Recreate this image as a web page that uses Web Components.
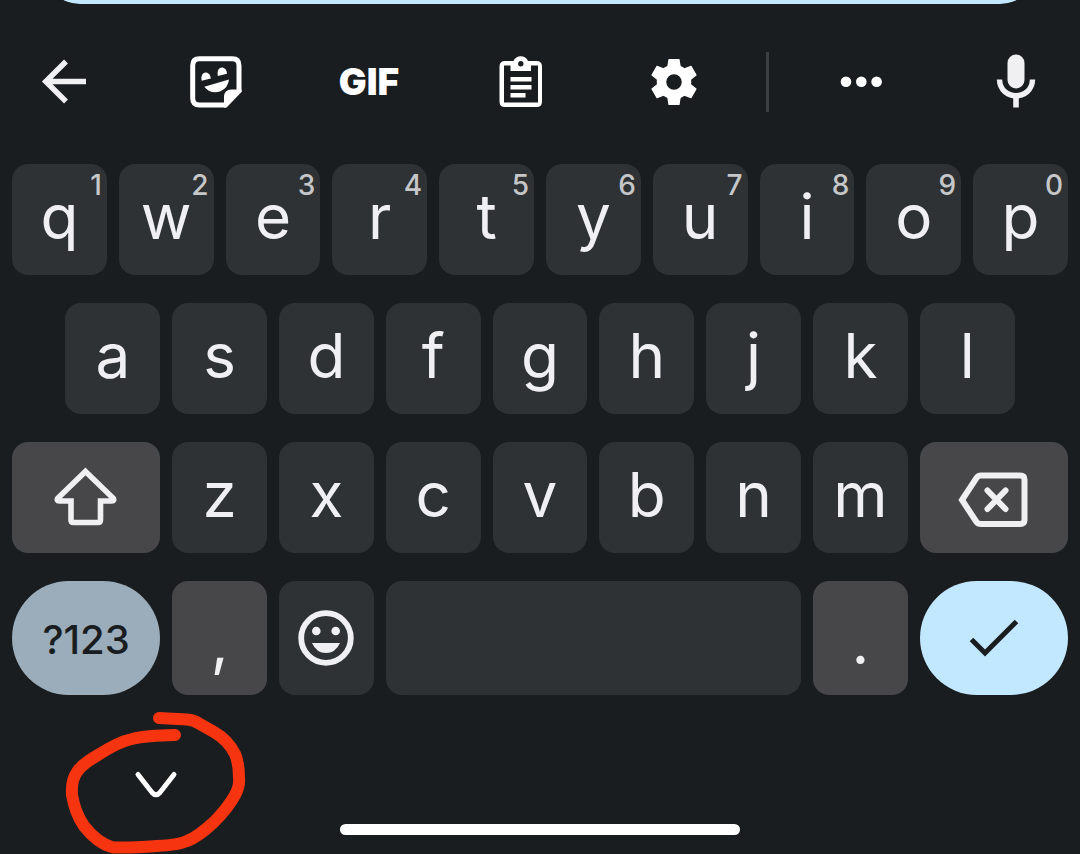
<!DOCTYPE html>
<html lang="en">
<head>
<meta charset="utf-8">
<meta name="viewport" content="width=device-width, initial-scale=1">
<title>Keyboard</title>
<style>
  body { margin: 0; background: #191d1f; color: #f0f0f3; font-family: Inter, Roboto, sans-serif; overflow: hidden; }
</style>
</head>
<body>
<kb-screen>
  <kb-toolbar slot="toolbar"></kb-toolbar>
  <kb-row>
    <kb-key hint="1">q</kb-key><kb-key hint="2">w</kb-key><kb-key hint="3">e</kb-key><kb-key hint="4">r</kb-key><kb-key hint="5">t</kb-key><kb-key hint="6">y</kb-key><kb-key hint="7">u</kb-key><kb-key hint="8">i</kb-key><kb-key hint="9">o</kb-key><kb-key hint="0">p</kb-key>
  </kb-row>
  <kb-row>
    <kb-key inset>a</kb-key><kb-key>s</kb-key><kb-key>d</kb-key><kb-key>f</kb-key><kb-key>g</kb-key><kb-key>h</kb-key><kb-key>j</kb-key><kb-key>k</kb-key><kb-key>l</kb-key>
  </kb-row>
  <kb-row>
    <kb-key wide tone="raised" icon label="Shift"><svg width="72" height="72" viewBox="0 0 72 72" fill="none" stroke="currentColor" stroke-width="5.600"><path d="M35.500 9.500 L63 36 Q65 38.800 61.500 39 H50.500 V58 Q50.500 60.500 48 60.500 H23.500 Q21 60.500 21 58 V39 H9.500 Q6 38.800 8 36 Z"/></svg></kb-key>
    <kb-key>z</kb-key><kb-key>x</kb-key><kb-key>c</kb-key><kb-key>v</kb-key><kb-key>b</kb-key><kb-key>n</kb-key><kb-key>m</kb-key>
    <kb-key wide tone="raised" icon label="Delete"><svg width="72" height="72" viewBox="0 0 72 72" fill="none" stroke="currentColor" stroke-width="6"><path d="M4 38 L18.500 16 Q20 13.500 23 13.500 H62 Q66.500 13.500 66.500 17.500 V58 Q66.500 62 62 62 H23 Q20 62 18.500 60 Z"/><path d="M29.500 28.500 L47.500 47 M47.500 28.500 L29.500 47" stroke-linecap="round"/></svg></kb-key>
  </kb-row>
  <kb-row tall>
    <kb-key wide tone="symbols">?123</kb-key>
    <kb-key tone="raised" low>,</kb-key>
    <kb-key icon label="Emoji"><svg width="56" height="56" viewBox="0 0 56 56" fill="currentColor"><circle cx="28" cy="28" r="24.800" fill="none" stroke="currentColor" stroke-width="5.800"/><circle cx="18.300" cy="21" r="4.300"/><circle cx="37.700" cy="21" r="4.300"/><path d="M14 33 H42 Q37.500 43 28 43 T14 33Z"/></svg></kb-key>
    <kb-key space label="Space"></kb-key>
    <kb-key tone="raised" low>.</kb-key>
    <kb-key wide tone="action" icon label="Done"><svg width="56" height="56" viewBox="0 0 56 56" fill="none" stroke="currentColor" stroke-width="5"><path d="M5.500 29.500 L19 43 L50.500 11.500"/></svg></kb-key>
  </kb-row>
  <kb-nav slot="nav"></kb-nav>
</kb-screen>

<script>
  function define(name, markup, setup) {
    const template = document.createElement('template');
    template.innerHTML = markup;
    customElements.define(name, class extends HTMLElement {
      constructor() {
        super();
        this.attachShadow({ mode: 'open' }).append(template.content.cloneNode(true));
      }
      connectedCallback() { if (setup) setup(this); }
    });
  }

  define('kb-screen', `
    <style>
      :host { display: flow-root; }
      .field { height: 72px; margin: -68px 44px 0; background: #c2e8ff; border-radius: 36px; }
      main { display: flex; flex-direction: column; gap: 28px; padding: 0 12px; }
    </style>
    <div class="field"></div>
    <slot name="toolbar"></slot>
    <main><slot></slot></main>
    <slot name="nav"></slot>`);

  define('kb-row', `
    <style>
      :host { display: grid; grid-template-columns: repeat(20, minmax(0, 1fr)); grid-auto-rows: 111px; gap: 12px; }
      :host([tall]) { grid-auto-rows: 114px; }
    </style>
    <slot></slot>`);

  define('kb-key', `
    <style>
      :host { display: block; grid-column: span 2; }
      :host([inset]) { grid-column: 2 / span 2; }
      :host([wide]) { grid-column: span 3; }
      :host([space]) { grid-column: span 8; }
      button {
        position: relative; display: flex; align-items: center; justify-content: center;
        box-sizing: border-box; width: 100%; height: 100%; margin: 0; padding: 0 0 6px; border: 0;
        border-radius: 16px; background: #2e3234; color: #f0f0f3;
        font: inherit; font-size: 62px; line-height: 80px;
      }
      .hint { position: absolute; top: 5px; right: 5px; color: #c6c7c9; font-size: 28px; line-height: 32px; font-weight: 500; }
      :host([tone="raised"]) button { background: #474749; }
      :host([icon]) button { padding: 0; }
      :host([low]) button { padding: 8px 0 0; }
      :host([tone="symbols"]) button { background: #9badbb; color: #191d1f; border-radius: 58px; font-size: 40px; font-weight: 500; padding: 4px 0 0; }
      :host([tone="action"]) button { background: #c2e8ff; color: #191d1f; border-radius: 58px; }
    </style>
    <button type="button"><slot></slot></button>`,
    host => {
      const button = host.shadowRoot.querySelector('button');
      const hint = host.getAttribute('hint');
      const label = host.getAttribute('label');
      if (label) button.setAttribute('aria-label', label);
      if (hint && !button.querySelector('.hint')) {
        const span = document.createElement('span');
        span.className = 'hint';
        span.textContent = hint;
        button.append(span);
      }
    });

  define('kb-tool', `
    <style>
      :host { display: block; }
      button { display: flex; align-items: center; justify-content: center; width: 72px; height: 72px; margin: 0; padding: 0; border: 0; background: none; color: #fff; font: 900 37px/40px Inter, sans-serif; }
    </style>
    <button type="button"><slot></slot></button>`,
    host => {
      const label = host.getAttribute('label');
      if (label) host.shadowRoot.querySelector('button').setAttribute('aria-label', label);
    });

  define('kb-toolbar', `
    <style>
      :host { display: flex; align-items: center; height: 156px; padding: 0 28px 4px; }
      .tools { display: flex; justify-content: space-between; flex: 3; }
      .more { flex: 1; }
      .divider { width: 3px; height: 60px; margin: 0 56px; background: #3b3f41; }
      svg { display: block; }
    </style>
    <div class="tools">
      <kb-tool label="Back"><svg width="56" height="56" viewBox="0 0 56 56" fill="none" stroke="#f0f0f3" stroke-width="5.500"><path d="M50 27.500 H10 M30 7.500 L9.800 27.500 L30 47.500"/></svg></kb-tool>
      <kb-tool label="Stickers"><svg width="56" height="56" viewBox="0 0 56 56" fill="#fff"><path d="M38 51 H11.500 Q4.700 51 4.700 44.200 V11.500 Q4.700 4.700 11.500 4.700 H44.200 Q51 4.700 51 11.500 V38" fill="none" stroke="#fff" stroke-width="5"/><path d="M53.500 38 L38.600 53.500 H36 V43 Q36 35.500 43.500 35.500 H53.500Z"/><path d="M13.700 26.800 C11.500 16 22.500 16 22.800 24.500Z M29.900 22 C27.700 11.200 38.700 11.200 39 19.700Z M16.300 32.700 L41 25.500 Q40 34 32.500 37.300 Q22.500 40.500 16.300 32.700Z"/></svg></kb-tool>
      <kb-tool>GIF</kb-tool>
      <kb-tool label="Clipboard"><svg width="56" height="56" viewBox="0 0 56 56" fill="#fff"><path fill-rule="evenodd" d="M12 7 H20.500 C22.500 0.500 33 0.500 35 7 H43.500 Q49 7 49 12.500 V47.500 Q49 53 43.500 53 H12 Q6.500 53 6.500 47.500 V12.500 Q6.500 7 12 7Z M11 11.500 V48.500 H45 V11.500 H38 V17 H17.500 V11.500Z M27.800 7 A2.700 2.700 0 1 0 27.800 12.400 A2.700 2.700 0 1 0 27.800 7Z"/><path d="M17.500 23 H38.500 V27.500 H17.500Z M17.500 31 H38.500 V35.500 H17.500Z M17.500 39 H32.500 V43.500 H17.500Z"/></svg></kb-tool>
      <kb-tool label="Settings"><svg width="56" height="56" viewBox="-28 -28 56 56" fill="#fff"><defs><path id="tooth" d="M-6.200 -15 L-5 -22.500 H5 L6.200 -15Z" stroke="#fff" stroke-width="1.200" stroke-linejoin="round"/></defs><circle r="12.500" fill="none" stroke="#fff" stroke-width="9.500"/><use href="#tooth"/><use href="#tooth" transform="rotate(60)"/><use href="#tooth" transform="rotate(120)"/><use href="#tooth" transform="rotate(180)"/><use href="#tooth" transform="rotate(240)"/><use href="#tooth" transform="rotate(300)"/></svg></kb-tool>
    </div>
    <div class="divider"></div>
    <div class="tools more">
      <kb-tool label="More"><svg width="56" height="56" viewBox="0 0 56 56" fill="#fff"><circle cx="13" cy="27.700" r="5.300"/><circle cx="28.300" cy="27.700" r="5.300"/><circle cx="43.600" cy="27.700" r="5.300"/></svg></kb-tool>
      <kb-tool label="Voice input"><svg width="56" height="56" viewBox="0 0 56 56" fill="#f0f0f3"><rect x="19.500" y="0.500" width="17" height="34" rx="8.500"/><path d="M11.500 25.500 C12 47 44 47 44.500 25.500" fill="none" stroke="#f0f0f3" stroke-width="5.400"/><path d="M25.200 42 H30.800 V53.500 H25.200Z"/></svg></kb-tool>
    </div>`);

  define('kb-nav', `
    <style>
      :host { display: flex; flex-direction: column; gap: 4px; padding: 53px 0 19px; }
      .hide { position: relative; width: 72px; height: 72px; margin-left: 120px; }
      button { display: flex; align-items: center; justify-content: center; width: 100%; height: 100%; padding: 0; border: 0; background: none; }
      .mark { position: absolute; left: -60px; top: -44px; pointer-events: none; }
      .home { width: 37%; height: 11px; border-radius: 6px; background: #fff; align-self: center; }
    </style>
    <div class="hide">
      <button type="button" aria-label="Hide keyboard"><svg width="56" height="56" viewBox="0 0 56 56" fill="none" stroke="#fff" stroke-width="5" stroke-linecap="round"><path d="M10 18.500 L24 36.500 Q28 41 32 36.500 L46 18.500"/></svg></button>
      <svg class="mark" width="192" height="150" viewBox="60 704 192 150" fill="none" stroke="#f63410" stroke-width="12" stroke-linecap="round" stroke-linejoin="round"><path d="M159 718 L187 719.500 Q194 720 199 723.500 L214 732 Q228 740 235 754 Q239 763 239 778 Q240 786 235 795 Q228 808 214 822 Q198 837 187 841 Q179 845 157 846 Q130 848 113 847.500 Q97 843 84 826 Q75 813 72 795 Q71 780 77 772 Q81 765 98 755 Q118 742 132 739 Q146 735.500 175 735"/></svg>
    </div>
    <div class="home"></div>`);
</script>
</body>
</html>
